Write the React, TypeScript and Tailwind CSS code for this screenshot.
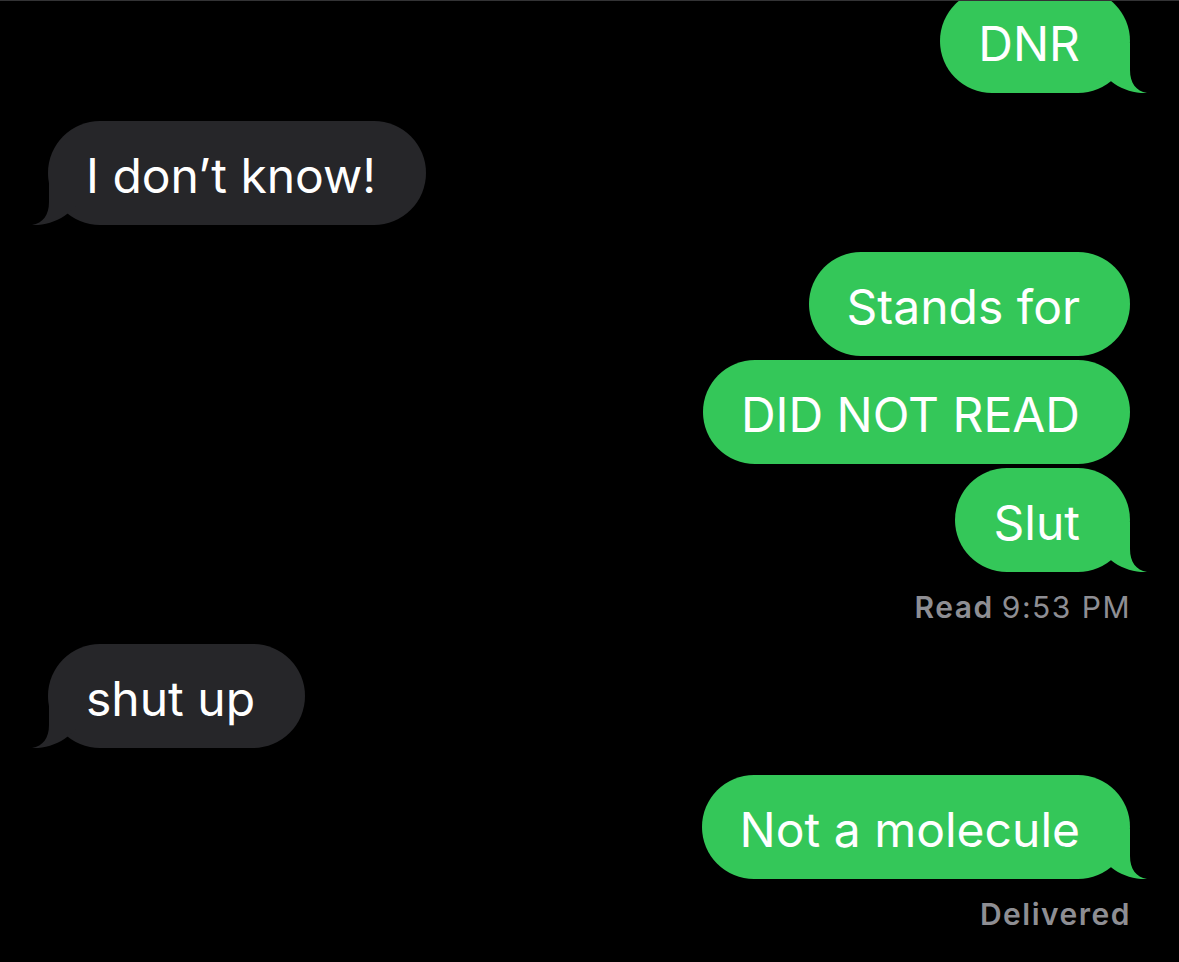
import clsx from "clsx"

interface BubbleProps {
  text: string
  sent?: boolean
  tail?: boolean
  className?: string
}

function Tail({ sent }: { sent?: boolean }) {
  return (
    <svg
      width="45"
      height="50"
      viewBox="0 0 45 50"
      className={clsx(
        "absolute bottom-0",
        sent ? "right-[-17px] text-[#34c759]" : "left-[-16px] -scale-x-100 text-[#262629]"
      )}
    >
      <path d="M28 0 L28 27 C28 40 34 48 45 50 C34 51 18 46 10 39 L0 30 L0 0 Z" fill="currentColor" />
    </svg>
  )
}

function Bubble({ text, sent, tail, className }: BubbleProps) {
  return (
    <div className={clsx("flex", sent ? "justify-end pr-[49px]" : "justify-start pl-[48px]", className)}>
      <div
        className={clsx(
          "relative h-[104px] flex items-center pl-[38px] pr-[50px] rounded-[52px] text-white text-[48px] tracking-[0px] whitespace-nowrap",
          sent ? "bg-[#34c759]" : "bg-[#262629]"
        )}
      >
        <span className="relative z-10 pt-[5px]">{text}</span>
        {tail && <Tail sent={sent} />}
      </div>
    </div>
  )
}

function Status({ children, className }: { children: React.ReactNode; className?: string }) {
  return (
    <div
      className={clsx(
        "flex justify-end pr-[48px] h-[30px] leading-[30px] text-[30px] tracking-[1.5px] text-[#8e8e93]",
        className
      )}
    >
      {children}
    </div>
  )
}

export default function App() {
  return (
    <div
      className="w-[1179px] h-[962px] bg-black border-t border-[#333335]"
      style={{ fontFamily: "Inter, 'Noto Sans', sans-serif" }}
    >
      <div className="h-[961px] overflow-hidden flex flex-col">
        <Bubble text="DNR" sent tail className="mt-[-12px]" />
        <Bubble text="I don’t know!" tail className="mt-[28px]" />
        <Bubble text="Stands for" sent className="mt-[27px]" />
        <Bubble text="DID NOT READ" sent className="mt-[4px]" />
        <Bubble text="Slut" sent tail className="mt-[4px]" />
        <Status className="mt-[20px]">
          <span className="font-semibold">Read</span>
          <span className="ml-[8px]">9:53 PM</span>
        </Status>
        <Bubble text="shut up" tail className="mt-[22px]" />
        <Bubble text="Not a molecule" sent tail className="mt-[27px]" />
        <Status className="mt-[20px]">
          <span className="font-semibold">Delivered</span>
        </Status>
      </div>
    </div>
  )
}
